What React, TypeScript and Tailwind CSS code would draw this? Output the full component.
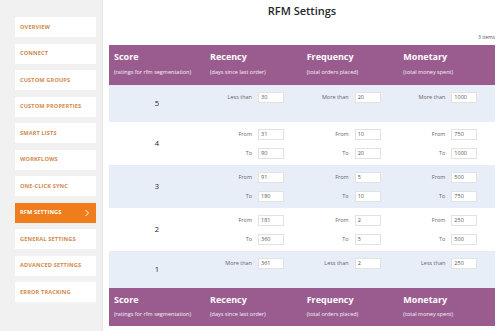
import React from "react";

const navItems = [
  "OVERVIEW",
  "CONNECT",
  "CUSTOM GROUPS",
  "CUSTOM PROPERTIES",
  "SMART LISTS",
  "WORKFLOWS",
  "ONE-CLICK SYNC",
  "RFM SETTINGS",
  "GENERAL SETTINGS",
  "ADVANCED SETTINGS",
  "ERROR TRACKING",
];

type Line = { label: string; value: string };
type Row = {
  score: string;
  bg: string;
  tall: boolean;
  cols: Line[][];
};

const rows: Row[] = [
  {
    score: "5",
    bg: "bg-[#e8eef8]",
    tall: false,
    cols: [
      [{ label: "Less than", value: "30" }],
      [{ label: "More than", value: "20" }],
      [{ label: "More than", value: "1000" }],
    ],
  },
  {
    score: "4",
    bg: "bg-white",
    tall: true,
    cols: [
      [
        { label: "From", value: "31" },
        { label: "To", value: "90" },
      ],
      [
        { label: "From", value: "10" },
        { label: "To", value: "20" },
      ],
      [
        { label: "From", value: "750" },
        { label: "To", value: "1000" },
      ],
    ],
  },
  {
    score: "3",
    bg: "bg-[#e8eef8]",
    tall: true,
    cols: [
      [
        { label: "From", value: "91" },
        { label: "To", value: "180" },
      ],
      [
        { label: "From", value: "5" },
        { label: "To", value: "10" },
      ],
      [
        { label: "From", value: "500" },
        { label: "To", value: "750" },
      ],
    ],
  },
  {
    score: "2",
    bg: "bg-white",
    tall: true,
    cols: [
      [
        { label: "From", value: "181" },
        { label: "To", value: "360" },
      ],
      [
        { label: "From", value: "2" },
        { label: "To", value: "5" },
      ],
      [
        { label: "From", value: "250" },
        { label: "To", value: "500" },
      ],
    ],
  },
  {
    score: "1",
    bg: "bg-[#e8eef8]",
    tall: false,
    cols: [
      [{ label: "More than", value: "361" }],
      [{ label: "Less than", value: "2" }],
      [{ label: "Less than", value: "250" }],
    ],
  },
];

const heads = [
  { t: "Score", s: "(ratings for rfm segmentation)" },
  { t: "Recency", s: "(days since last order)" },
  { t: "Frequency", s: "(total orders placed)" },
  { t: "Monetary", s: "(total money spent)" },
];

function HeaderRow({ footer }: { footer?: boolean }) {
  return (
    <div
      className={`flex bg-[#9a5b8f] text-white ${
        footer ? "h-[38px] pt-[6px]" : "h-[40px] pt-[6px]"
      }`}
    >
      {heads.map((h, i) => (
        <div key={i} className={`${i === 0 ? "w-[96px]" : "flex-1"} pl-[5px]`}>
          <div className="text-[9px] font-bold leading-[12px]">{h.t}</div>
          <div
            className={`text-[5.5px] leading-[7px] text-white/90 ${
              footer ? "mt-[5px]" : "mt-[6px]"
            }`}
          >
            {h.s}
          </div>
        </div>
      ))}
    </div>
  );
}

function Chevron() {
  return (
    <svg width="6" height="8" viewBox="0 0 6 8" fill="none">
      <path d="M1.5 1 L4.5 4 L1.5 7" stroke="white" strokeWidth="1" />
    </svg>
  );
}

export default function App() {
  return (
    <div
      className="w-[500px] h-[331px] flex overflow-hidden bg-white"
      style={{ fontFamily: '"Open Sans", "Noto Sans", sans-serif' }}
    >
      {/* Sidebar */}
      <div className="w-[103px] h-full bg-[#f1f1f1] border-r border-[#e6e6e6] pt-[17px] pl-[15px] flex flex-col gap-[6.5px]">
        {navItems.map((n) => {
          const active = n === "RFM SETTINGS";
          return (
            <div
              key={n}
              className={`w-[81px] h-[20px] flex items-center justify-between pl-[5px] pr-[6px] text-[5.6px] font-bold tracking-[0.15px] ${
                active ? "bg-[#f07d1c] text-white" : "bg-white text-[#d08a4e]"
              }`}
            >
              <span>{n}</span>
              {active && <Chevron />}
            </div>
          );
        })}
      </div>

      {/* Main */}
      <div className="flex-1 h-full flex flex-col pl-[6px] pr-[5px]">
        <div className="h-[22px] pt-[3px] text-center text-[11px] font-semibold text-[#23282d] leading-[16px]">
          RFM Settings
        </div>
        <div className="h-[23px] flex items-end justify-end pb-[4px] text-[5px] text-[#555]">
          3 items
        </div>
        <div className="flex flex-col">
          <HeaderRow />
          {rows.map((r) => (
            <div
              key={r.score}
              className={`flex ${r.bg} ${r.tall ? "h-[43px]" : "h-[37px]"}`}
            >
              <div className="w-[96px] flex items-center justify-center text-[7.5px] font-medium text-[#222]">
                {r.score}
              </div>
              {r.cols.map((c, ci) => (
                <div
                  key={ci}
                  className="flex-1 flex flex-col gap-[8px] pt-[6.5px]"
                >
                  {c.map((l, li) => (
                    <div key={li} className="flex items-center h-[11px]">
                      <div className="w-[47px] text-right text-[5.5px] text-[#666]">
                        {l.label}
                      </div>
                      <div className="ml-[6px] w-[26px] h-[11px] bg-white border border-[#e2e2e2] text-[5.5px] text-[#555] pl-[2px] flex items-center">
                        {l.value}
                      </div>
                    </div>
                  ))}
                </div>
              ))}
            </div>
          ))}
          <HeaderRow footer />
        </div>
      </div>
    </div>
  );
}
